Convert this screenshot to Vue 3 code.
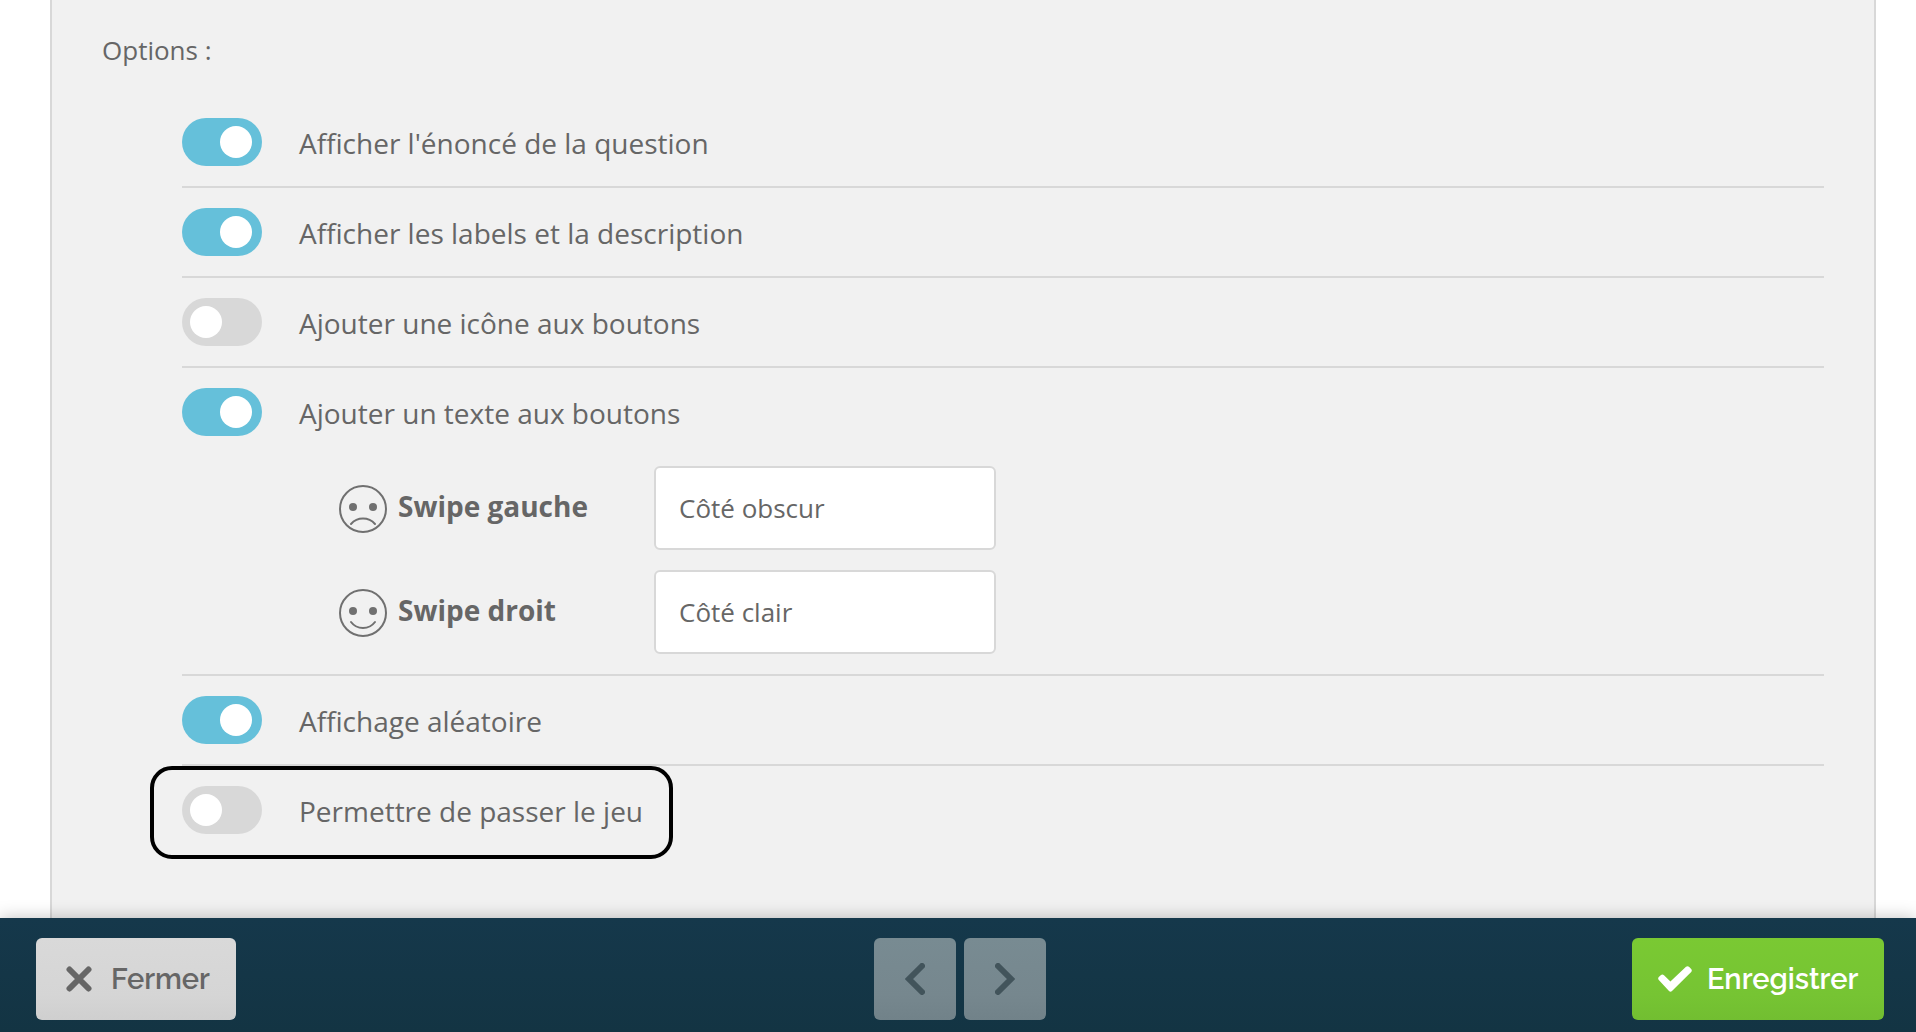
<script setup>
import { reactive } from 'vue'

const options = reactive([
  { id: 'statement', label: "Afficher l'énoncé de la question", on: true },
  { id: 'labels', label: 'Afficher les labels et la description', on: true },
  { id: 'icon', label: 'Ajouter une icône aux boutons', on: false },
  {
    id: 'text',
    label: 'Ajouter un texte aux boutons',
    on: true,
    swipes: [
      { id: 'left', label: 'Swipe gauche', value: 'Côté obscur', mouth: 'M12 39 A16 16 0 0 1 36 39' },
      { id: 'right', label: 'Swipe droit', value: 'Côté clair', mouth: 'M12 33 A15 15 0 0 0 36 33' },
    ],
  },
  { id: 'random', label: 'Affichage aléatoire', on: true },
  { id: 'skip', label: 'Permettre de passer le jeu', on: false, highlighted: true },
])
</script>

<template>
  <div class="page">
    <main class="panel">
      <h2 class="title">Options :</h2>
      <ul class="options">
        <li v-for="o in options" :key="o.id" class="option" :class="{ highlighted: o.highlighted }">
          <label class="switch">
            <input v-model="o.on" type="checkbox" class="toggle" />
            <span>{{ o.label }}</span>
          </label>
          <div v-if="o.swipes && o.on" class="swipes">
            <div v-for="s in o.swipes" :key="s.id" class="swipe">
              <label :for="s.id" class="swipe-label">
                <svg class="face" viewBox="0 0 48 48" aria-hidden="true">
                  <circle cx="24" cy="24" r="23" />
                  <circle class="eye" cx="14" cy="22" r="4" />
                  <circle class="eye" cx="34" cy="22" r="4" />
                  <path :d="s.mouth" />
                </svg>
                <span>{{ s.label }}</span>
              </label>
              <input :id="s.id" v-model="s.value" type="text" class="field" />
            </div>
          </div>
        </li>
      </ul>
    </main>

    <footer class="bar">
      <button type="button" class="btn close">
        <svg width="26" height="26" viewBox="0 0 26 26" aria-hidden="true">
          <path d="M3.5 3.5 L22.5 22.5 M22.5 3.5 L3.5 22.5" stroke-width="6" stroke-linecap="round" />
        </svg>
        Fermer
      </button>
      <div class="nav">
        <button type="button" class="btn step" aria-label="Précédent">
          <svg width="20" height="32" viewBox="0 0 20 32" aria-hidden="true">
            <path d="M17 3 L4 16 L17 29" stroke-width="6" stroke-linecap="round" />
          </svg>
        </button>
        <button type="button" class="btn step" aria-label="Suivant">
          <svg width="20" height="32" viewBox="0 0 20 32" aria-hidden="true">
            <path d="M3 3 L16 16 L3 29" stroke-width="6" stroke-linecap="round" />
          </svg>
        </button>
      </div>
      <button type="button" class="btn save">
        <svg width="34" height="26" viewBox="0 0 34 26" aria-hidden="true">
          <path d="M0.8 14 Q-0.5 12.5 0.8 11 L3 9 Q4.5 8 6 9.2 L12.4 15.4 L28 0.8 Q29.5 -0.3 31 0.8 L33.2 3 Q34.4 4.5 33.2 6 L14 25 Q12.5 26.4 11 25 Z" class="solid" />
        </svg>
        Enregistrer
      </button>
    </footer>
  </div>
</template>

<style>
body {
  margin: 0;
  background: #fff;
}
</style>

<style scoped>
.page {
  display: flex;
  flex-direction: column;
  min-height: 100vh;
  color: #666;
  font-family: 'Open Sans', 'Noto Sans', sans-serif;
  font-size: 28px;
  line-height: 40px;
}

.panel {
  box-sizing: border-box;
  flex: 1;
  margin: 0 40px 0 50px;
  padding: 30px 50px 40px;
  border: solid #d8d8d8;
  border-width: 0 2px;
  background: #f1f1f1;
}

.title {
  margin: 0;
  font-size: 26px;
  font-weight: 400;
}

.options {
  margin: 28px 0 0 80px;
  padding: 0;
  list-style: none;
}

.option {
  padding: 20px 0;
  border-bottom: 2px solid #d8d8d8;
}

.option.highlighted {
  width: fit-content;
  margin-left: -32px;
  padding: 16px 26px 21px 28px;
  border: 4px solid #000;
  border-radius: 22px;
}

.switch {
  display: flex;
  align-items: center;
  gap: 37px;
  height: 48px;
}

.switch span {
  padding-top: 2px;
}

.toggle {
  appearance: none;
  display: flex;
  align-items: center;
  flex: none;
  box-sizing: border-box;
  width: 80px;
  height: 48px;
  margin: 0;
  padding: 0 10px 0 8px;
  border-radius: 24px;
  background: #d8d8d8;
}

.toggle::before {
  content: '';
  width: 32px;
  height: 32px;
  border-radius: 50%;
  background: #fff;
}

.toggle:checked {
  justify-content: flex-end;
  background: #65c0da;
}

.swipes {
  display: flex;
  flex-direction: column;
  gap: 20px;
  margin: 30px 0 0 157px;
}

.swipe {
  display: flex;
  align-items: center;
}

.swipe-label {
  display: flex;
  align-items: center;
  gap: 11px;
  width: 315px;
  font-weight: 700;
}

.swipe-label span {
  padding-bottom: 4px;
}

.face {
  width: 48px;
  height: 48px;
  padding-top: 2px;
  fill: none;
  stroke: #707070;
  stroke-width: 2;
  stroke-linecap: round;
}

.face .eye {
  fill: #707070;
  stroke: none;
}

.field {
  box-sizing: border-box;
  width: 342px;
  height: 84px;
  padding: 0 23px;
  border: 2px solid #d8d8d8;
  border-radius: 6px;
  background: #fff;
  color: #666;
  font: inherit;
  font-size: 26px;
}

.bar {
  position: sticky;
  bottom: 0;
  display: grid;
  grid-template-columns: 1fr auto 1fr;
  align-items: center;
  padding: 20px 32px 12px 36px;
  background: linear-gradient(#15384b, #133443);
  box-shadow: 0 0 16px rgba(0, 0, 0, 0.25);
}

.nav {
  display: flex;
  gap: 8px;
}

.btn {
  display: flex;
  align-items: center;
  height: 82px;
  padding: 0;
  border: 0;
  border-radius: 6px;
  color: #666;
  font-family: Raleway, Lato, sans-serif;
  font-size: 29px;
  font-weight: 600;
}

.btn svg {
  fill: none;
  stroke: currentColor;
}

.btn .solid {
  fill: currentColor;
  stroke: none;
}

.close {
  gap: 19px;
  width: 200px;
  padding-left: 30px;
  background: linear-gradient(#d9d9d9, #d5d5d5 70%, #cfcfcf);
}

.step {
  justify-content: center;
  width: 82px;
  background: linear-gradient(#788b92, #76878e 70%, #718289);
  color: #42545b;
}

.save {
  justify-self: end;
  gap: 15px;
  width: 252px;
  padding-left: 26px;
  background: linear-gradient(#7ac933, #76c433 70%, #72be31);
  color: #fff;
}
</style>
